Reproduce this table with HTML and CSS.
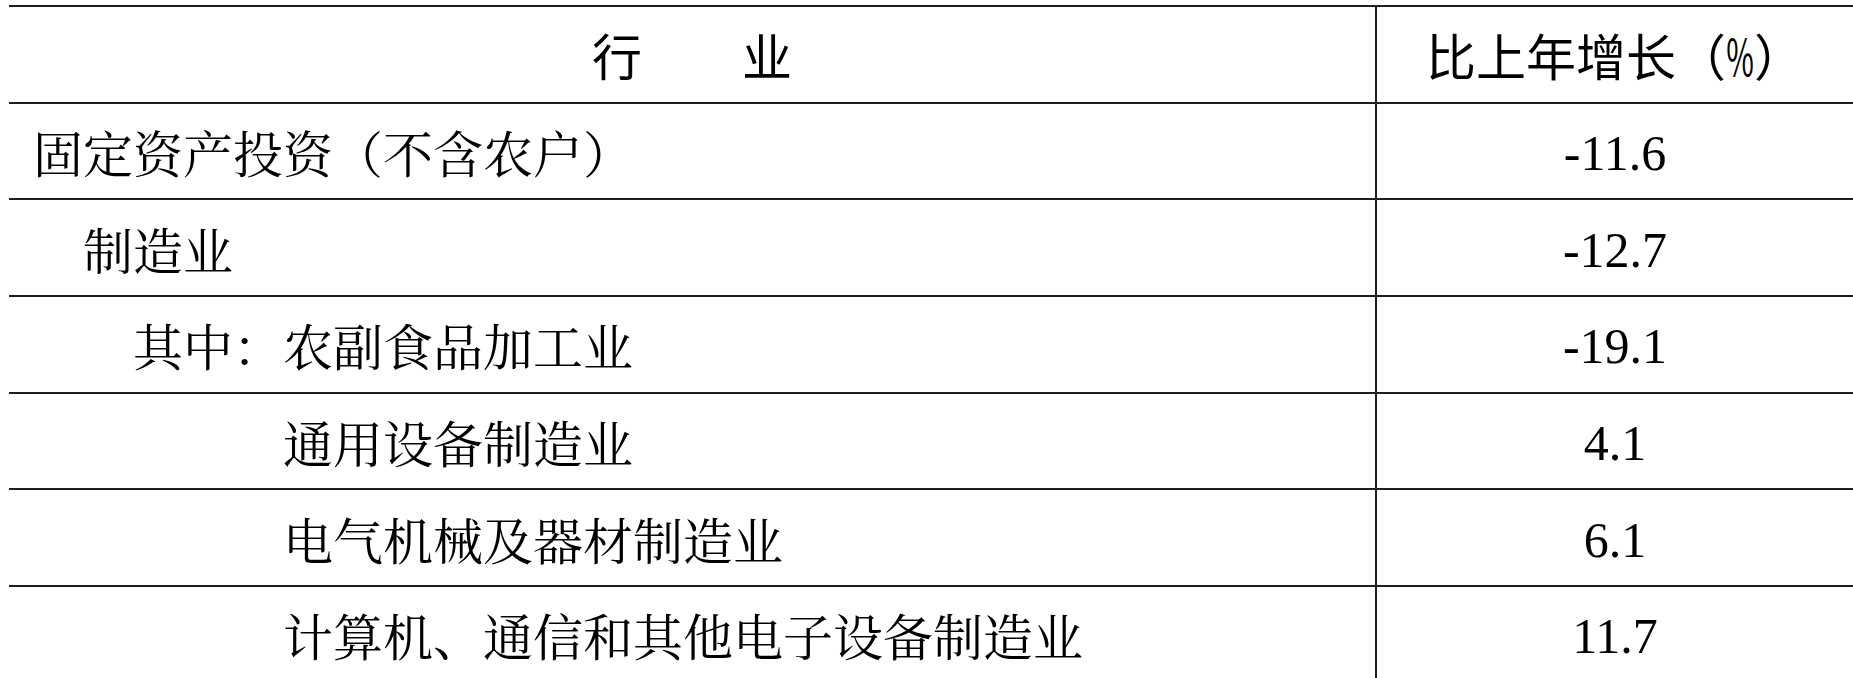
FILE: index.html
```html
<!DOCTYPE html>
<html lang="zh-CN">
<head>
<meta charset="utf-8">
<title>固定资产投资</title>
<link rel="stylesheet" href="styles.css">
</head>
<body>
<div class="sheet">
  <div class="cell head name">行　　业</div>
  <div class="cell head val">比上年增长（<span class="pct">%</span>）</div>

  <div class="cell name lv0">固定资产投资（不含农户）</div>
  <div class="cell val num">-11.6</div>

  <div class="cell name lv1">制造业</div>
  <div class="cell val num">-12.7</div>

  <div class="cell name lv2">其中：农副食品加工业</div>
  <div class="cell val num">-19.1</div>

  <div class="cell name lv5">通用设备制造业</div>
  <div class="cell val num">4.1</div>

  <div class="cell name lv5">电气机械及器材制造业</div>
  <div class="cell val num">6.1</div>

  <div class="cell name lv5">计算机、通信和其他电子设备制造业</div>
  <div class="cell val num">11.7</div>
</div>
</body>
</html>
```

FILE: styles.css
```css
html, body {
  margin: 0;
  padding: 0;
  background: #ffffff;
  overflow: hidden;
}

.sheet {
  display: grid;
  grid-template-columns: 1366px 1fr;
  grid-auto-rows: 96.67px;
  margin: 5px 0 0 9px;
  color: #000;
  font-family: "Noto Serif CJK SC", "Noto Sans CJK SC", sans-serif;
  font-size: 50px;
}

.cell {
  box-sizing: border-box;
  border-top: 2px solid #1e1e1e;
  display: flex;
  align-items: center;
  line-height: 1;
  white-space: nowrap;
}

.val {
  border-left: 2px solid #1e1e1e;
  justify-content: center;
}

.head {
  font-family: "Noto Sans CJK SC", sans-serif;
}

.head.name {
  justify-content: center;
}

.pct {
  display: inline-block;
  transform: scaleX(0.6);
  margin: 0 -9px;
}

.num {
  font-family: "Liberation Serif", "Times New Roman", serif;
  font-size: 50px;
  padding-top: 4px;
}

.lv0 { padding-left: 24px; }
.lv1 { padding-left: calc(24px + 1em); }
.lv2 { padding-left: calc(24px + 2em); }
.lv5 { padding-left: calc(24px + 5em); }
```
